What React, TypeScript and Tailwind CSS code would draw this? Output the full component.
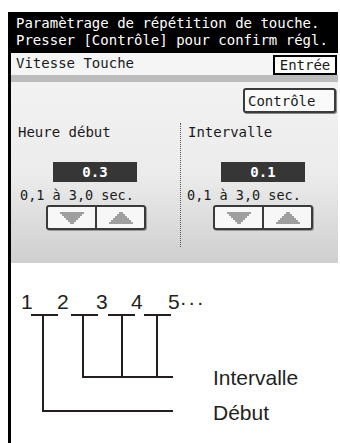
import React from 'react';

const mono = { fontFamily: '"DejaVu Sans Mono", "Liberation Mono", monospace' };
const sans = { fontFamily: '"Liberation Sans", Arial, sans-serif' };

const DownArrow = () => (
  <svg width="24" height="12" viewBox="0 0 24 12">
    {[0, 2, 4, 6, 8, 10].map((y, i) => (
      <line key={y} x1={i * 2} x2={24 - i * 2} y1={y + 1} y2={y + 1} stroke="#707070" strokeWidth="1.3" />
    ))}
  </svg>
);

const UpArrow = () => (
  <svg width="26" height="12" viewBox="0 0 26 12">
    {[0, 2, 4, 6, 8, 10].map((y, i) => (
      <line key={y} x1={11 - i * 2} x2={15 + i * 2} y1={y + 1} y2={y + 1} stroke="#707070" strokeWidth="1.3" />
    ))}
  </svg>
);

const Stepper = () => (
  <div className="w-[100px] h-[25px] flex border-2 border-[#3a3a3a] rounded-[3px] bg-[#f7f7f7] shadow-[1px_1px_0_#9a9a9a]">
    <div className="flex-1 flex items-center justify-center border-r-2 border-[#3a3a3a]">
      <DownArrow />
    </div>
    <div className="flex-1 flex items-center justify-center">
      <UpArrow />
    </div>
  </div>
);

const Setting = ({ title, value, boxMl, btnMl, rangeMl }: { title: string; value: string; boxMl: string; btnMl: string; rangeMl: string }) => (
  <div className="flex flex-col pl-[7px] pt-[1px]">
    <div className="h-[17px] leading-[17px]">{title}</div>
    <div className={`mt-[21px] w-[84px] h-[20px] bg-[#363636] text-white font-bold flex items-center justify-center ${boxMl}`}>{value}</div>
    <div className={`mt-[5px] h-[17px] leading-[17px] text-[13.5px] ${rangeMl}`}>0,1 à 3,0 sec.</div>
    <div className={`mt-[1px] ${btnMl}`}>
      <Stepper />
    </div>
  </div>
);

export default function App() {
  return (
    <div className="w-[340px] h-[443px] bg-white overflow-hidden">
      <div className="ml-2 mt-3 w-[330px] h-[431px] border-l-[3px] border-black flex flex-col">
        {/* panel screen */}
        <div className="h-[251px] bg-[#ededed] flex flex-col text-[14px] text-[#1a1a1a]" style={mono}>
          <div className="h-[41px] bg-black text-white pl-[5px] pt-[3px] leading-[17px] whitespace-nowrap">
            <div>Paramètrage de répétition de touche.</div>
            <div>Presser [Contrôle] pour confirm régl.</div>
          </div>
          <div className="h-[22px] flex items-end justify-between bg-[#f5f5f5]">
            <div className="pl-[5px] pb-[3px] leading-[17px]">Vitesse Touche</div>
            <div className="w-[64px] h-[20px] mr-[1px] border-2 border-black bg-white flex items-center justify-center leading-none">Entrée</div>
          </div>
          <div className="h-[7px] bg-[#bcbcbc]" />
          <div className="flex-1 flex flex-col bg-gradient-to-b from-[#f2f2f2] via-[#ececec] to-[#cfcfcf]">
            <div className="pt-[6px] flex justify-end pr-[2px]">
              <div className="w-[93px] h-[25px] pl-[3px] border-2 border-[#3a3a3a] rounded-[3px] bg-[#fafafa] shadow-[1px_1px_0_#8a8a8a] flex items-center leading-none">Contrôle</div>
            </div>
            <div className="mt-[10px] h-[124px] flex">
              <div className="w-[169px]">
                <Setting title="Heure début" value="0.3" boxMl="ml-[35px]" rangeMl="ml-[2px]" btnMl="ml-[28px]" />
              </div>
              <div className="flex-1 border-l border-dotted border-[#555]">
                <Setting title="Intervalle" value="0.1" boxMl="ml-[33px]" rangeMl="ml-[-1px]" btnMl="ml-[25px]" />
              </div>
            </div>
          </div>
        </div>

        {/* diagram */}
        <div className="relative flex-1 text-[21px] leading-none text-[#231f20]" style={sans}>
          <svg className="absolute left-0 top-0" width="329" height="180" viewBox="0 0 329 180">
            <g stroke="#231f20" strokeWidth="2" fill="none">
              <line x1="20" y1="52" x2="47" y2="52" />
              <line x1="60" y1="52" x2="87" y2="52" />
              <line x1="97" y1="52" x2="124" y2="52" />
              <line x1="133" y1="52" x2="160" y2="52" />
              <line x1="32" y1="52" x2="32" y2="148" />
              <line x1="72" y1="52" x2="72" y2="114" />
              <line x1="111" y1="52" x2="111" y2="114" />
              <line x1="146" y1="52" x2="146" y2="114" />
              <line x1="71" y1="114" x2="162" y2="114" />
              <line x1="31" y1="148" x2="162" y2="148" />
            </g>
          </svg>
          <span className="absolute left-[10px] top-[28px]">1</span>
          <span className="absolute left-[46px] top-[28px]">2</span>
          <span className="absolute left-[85px] top-[28px]">3</span>
          <span className="absolute left-[120px] top-[28px]">4</span>
          <span className="absolute left-[157px] top-[28px] whitespace-nowrap">5<span className="tracking-[1.5px]">···</span></span>
          <span className="absolute left-[202px] top-[104px]">Intervalle</span>
          <span className="absolute left-[202px] top-[139px]">Début</span>
        </div>
      </div>
    </div>
  );
}
